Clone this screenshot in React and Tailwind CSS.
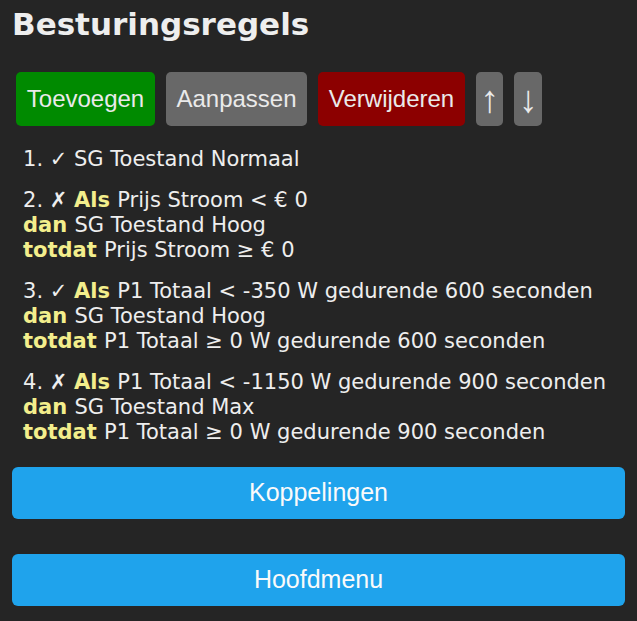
import React from "react";

const rules = [
  { n: 1, ok: true, parts: [[null, "SG Toestand Normaal"]] },
  {
    n: 2,
    ok: false,
    parts: [
      ["Als", "Prijs Stroom < € 0"],
      ["dan", "SG Toestand Hoog"],
      ["totdat", "Prijs Stroom ≥ € 0"],
    ],
  },
  {
    n: 3,
    ok: true,
    parts: [
      ["Als", "P1 Totaal < -350 W gedurende 600 seconden"],
      ["dan", "SG Toestand Hoog"],
      ["totdat", "P1 Totaal ≥ 0 W gedurende 600 seconden"],
    ],
  },
  {
    n: 4,
    ok: false,
    parts: [
      ["Als", "P1 Totaal < -1150 W gedurende 900 seconden"],
      ["dan", "SG Toestand Max"],
      ["totdat", "P1 Totaal ≥ 0 W gedurende 900 seconden"],
    ],
  },
];

const btn =
  "h-[54px] rounded-[5px] flex items-center justify-center text-[24px] text-[#eaeaea] whitespace-nowrap";

const Rule = ({ rule }) => {
  return (
    <div className="mt-[16px] first:mt-0">
      {rule.parts.map((p, i) => (
        <div key={i} className="whitespace-nowrap">
          {i === 0 && (
            <span>
              {rule.n}. <span className="font-bold">{rule.ok ? "✓" : "✗"}</span>{" "}
            </span>
          )}
          {p[0] && (
            <span className="font-bold text-[#f3ee8c]">{p[0]} </span>
          )}
          {p[1]}
        </div>
      ))}
    </div>
  );
};

export default function App() {
  return (
    <div
      className="min-h-[621px] w-full bg-[#252525] text-[#eeeeee] px-[12px] flex flex-col"
      style={{ fontFamily: "'DejaVu Sans', Verdana, sans-serif" }}
    >
      <h1 className="mt-[6px] text-[31px] leading-[36px] font-bold">
        Besturingsregels
      </h1>

      <div
        className="mt-[30px] ml-[4px] flex flex-row gap-[11px]"
        style={{ fontFamily: "'Liberation Sans', Arial, sans-serif" }}
      >
        <button className={`${btn} w-[139px] bg-[#008a00]`}>Toevoegen</button>
        <button className={`${btn} w-[141px] bg-[#686868]`}>Aanpassen</button>
        <button className={`${btn} w-[147px] bg-[#8c0000]`}>Verwijderen</button>
        <button className={`${btn} w-[27px] bg-[#686868] text-[38px] leading-none`}>↑</button>
        <button className={`${btn} w-[28px] bg-[#686868] text-[38px] leading-none`}>↓</button>
      </div>

      <div className="mt-[21px] pl-[11px] text-[21px] leading-[25px]">
        {rules.map((r) => (
          <Rule key={r.n} rule={r} />
        ))}
      </div>

      <div
        className="mt-[22px] flex flex-col gap-[35px]"
        style={{ fontFamily: "'Liberation Sans', Arial, sans-serif" }}
      >
        <button className="h-[52px] w-full rounded-[6px] bg-[#1fa3ec] text-[25px] text-[#fafafa]">
          Koppelingen
        </button>
        <button className="h-[52px] w-full rounded-[6px] bg-[#1fa3ec] text-[25px] text-[#fafafa]">
          Hoofdmenu
        </button>
      </div>
    </div>
  );
}
